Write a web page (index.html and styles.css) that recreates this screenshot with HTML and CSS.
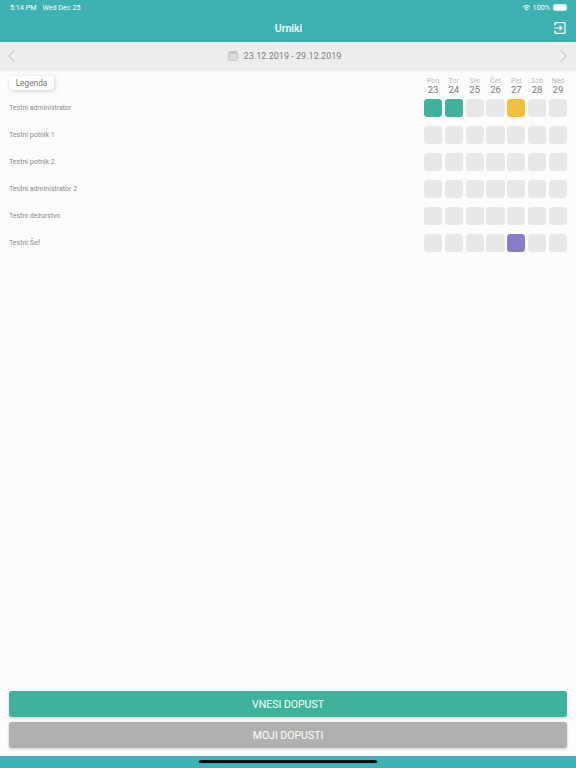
FILE: index.html
```html
<!DOCTYPE html>
<html lang="sl">

<head>
    <meta charset="UTF-8">
    <meta name="viewport" content="width=device-width, initial-scale=1.0">
    <title>Urniki</title>
    <link rel="stylesheet" href="styles.css">
</head>

<body>

    <div class="app">
        <div class="header">
            <div class="status">
                <span class="time">5:14 PM</span>
                <span class="date">Wed Dec 25</span>
                <span class="status-right">
                    <svg class="wifi" width="9" height="7" viewBox="0 0 11 8">
                        <path d="M5.500 8 3.700 5.900a2.700 2.700 0 0 1 3.600 0z" fill="#fff"/>
                        <path d="M1 3.400a6.600 6.600 0 0 1 9 0M2.600 5a4.300 4.300 0 0 1 5.800 0" fill="none" stroke="#fff" stroke-width="1.200"/>
                    </svg>
                    <span>100%</span>
                    <span class="battery"><span class="battery-fill"></span></span>
                </span>
            </div>
            <div class="title-row">
                <span class="title">Urniki</span>
                <svg class="logout" width="12" height="12" viewBox="0 0 12 12">
                    <path d="M1 3.500V1.200a.5.5 0 0 1 .5-.5h9a.5.5 0 0 1 .5.5v9.600a.5.5 0 0 1-.5.5h-9a.5.5 0 0 1-.5-.5V8.500" fill="none" stroke="#fff" stroke-width="1.200"/>
                    <path d="M0.500 6h7M5.500 3.700 7.900 6 5.500 8.300" fill="none" stroke="#fff" stroke-width="1.200"/>
                </svg>
            </div>
        </div>

        <div class="week-bar">
            <svg width="7" height="14" viewBox="0 0 7 14">
                <path d="M6.500 1 .8 7l5.700 6" fill="none" stroke="#b4b4b4" stroke-width="1"/>
            </svg>
            <div class="week-range">
                <svg width="10" height="10" viewBox="0 0 10 10">
                    <rect x="0.500" y="0.500" width="9" height="9" rx="1" fill="#dcdcdc" stroke="#c6c6c6"/>
                    <rect x="0.500" y="0.500" width="9" height="2.500" fill="#c6c6c6"/>
                </svg>
                <span>23.12.2019 - 29.12.2019</span>
            </div>
            <svg width="7" height="14" viewBox="0 0 7 14">
                <path d="M.5 1l5.700 6-5.700 6" fill="none" stroke="#b4b4b4" stroke-width="1"/>
            </svg>
        </div>

        <div class="content">
            <div class="top-row">
                <div class="legend">Legenda</div>
                <div class="days">
                    <div class="day"><span>Pon</span><b>23</b></div>
                    <div class="day"><span>Tor</span><b>24</b></div>
                    <div class="day"><span>Sre</span><b>25</b></div>
                    <div class="day"><span>Čet</span><b>26</b></div>
                    <div class="day"><span>Pet</span><b>27</b></div>
                    <div class="day"><span>Sob</span><b>28</b></div>
                    <div class="day"><span>Ned</span><b>29</b></div>
                </div>
            </div>

            <div class="person">
                <span class="name">Testni administrator</span>
                <div class="days">
                    <div class="cell green"></div><div class="cell green"></div><div class="cell"></div><div class="cell"></div><div class="cell yellow"></div><div class="cell"></div><div class="cell"></div>
                </div>
            </div>
            <div class="person">
                <span class="name">Testni potnik 1</span>
                <div class="days">
                    <div class="cell"></div><div class="cell"></div><div class="cell"></div><div class="cell"></div><div class="cell"></div><div class="cell"></div><div class="cell"></div>
                </div>
            </div>
            <div class="person">
                <span class="name">Testni potnik 2</span>
                <div class="days">
                    <div class="cell"></div><div class="cell"></div><div class="cell"></div><div class="cell"></div><div class="cell"></div><div class="cell"></div><div class="cell"></div>
                </div>
            </div>
            <div class="person">
                <span class="name">Testni administrator 2</span>
                <div class="days">
                    <div class="cell"></div><div class="cell"></div><div class="cell"></div><div class="cell"></div><div class="cell"></div><div class="cell"></div><div class="cell"></div>
                </div>
            </div>
            <div class="person">
                <span class="name">Testni dežurstvo</span>
                <div class="days">
                    <div class="cell"></div><div class="cell"></div><div class="cell"></div><div class="cell"></div><div class="cell"></div><div class="cell"></div><div class="cell"></div>
                </div>
            </div>
            <div class="person">
                <span class="name">Testni Šef</span>
                <div class="days">
                    <div class="cell"></div><div class="cell"></div><div class="cell"></div><div class="cell"></div><div class="cell purple"></div><div class="cell"></div><div class="cell"></div>
                </div>
            </div>
        </div>

        <div class="actions">
            <button class="button button-green">VNESI DOPUST</button>
            <button class="button button-grey">MOJI DOPUSTI</button>
        </div>

        <div class="footer"><div class="home-bar"></div></div>
    </div>

</body>

</html>
```

FILE: styles.css
```css
* {
    box-sizing: border-box;
}

body {
    font-family: 'Roboto', 'Liberation Sans', sans-serif;
    background-color: #fcfcfc;
    color: #777;
    margin: 0;
    padding: 0;
}

.app {
    display: flex;
    flex-direction: column;
    height: 768px;
}

.header {
    height: 42px;
    background-color: #3eb1b3;
    color: #fff;
    padding: 0 9px 0 10px;
}

.status {
    display: flex;
    align-items: center;
    height: 14px;
    font-size: 7.2px;
    gap: 6px;
}

.status-right {
    margin-left: auto;
    display: flex;
    align-items: center;
    gap: 2px;
}

.battery {
    width: 14px;
    height: 7px;
    margin-left: 1px;
    border: 1px solid #d5f0f0;
    border-radius: 2px;
}

.battery-fill {
    display: block;
    height: 100%;
    background-color: #fff;
}

.title-row {
    position: relative;
    height: 28px;
    display: flex;
    align-items: center;
    justify-content: center;
}

.title {
    font-size: 10.5px;
    font-weight: 500;
}

.logout {
    position: absolute;
    right: 1px;
    top: 8px;
}

.week-bar {
    height: 28px;
    background-color: #ededed;
    box-shadow: 0 1px 2px rgba(0, 0, 0, 0.08);
    display: flex;
    align-items: center;
    justify-content: space-between;
    padding: 0 9px 0 8px;
}

.week-range {
    display: flex;
    align-items: center;
    gap: 6px;
    padding-right: 6px;
    font-size: 9px;
    color: #808080;
    letter-spacing: 0.02px;
}

.content {
    flex: 1;
    padding: 6px 9px 0;
}

.top-row {
    display: flex;
    justify-content: space-between;
    align-items: flex-start;
    height: 22px;
    margin-bottom: 1px;
}

.legend {
    background-color: #fff;
    border-radius: 3px;
    box-shadow: 1px 1px 4px rgba(0, 0, 0, 0.18);
    font-size: 8.3px;
    height: 14px;
    width: 45px;
    line-height: 14px;
    text-align: center;
}

.days {
    display: grid;
    grid-template-columns: repeat(7, 18.2px);
    column-gap: 2.63px;
}

.day {
    display: flex;
    flex-direction: column;
    align-items: center;
    line-height: 9px;
}

.day span {
    font-size: 7.2px;
    color: #bcbcbc;
}

.day b {
    font-size: 9.5px;
    font-weight: 400;
    color: #7a7a7a;
    line-height: 10px;
}

.person {
    display: flex;
    justify-content: space-between;
    align-items: center;
    height: 18px;
    margin-bottom: 9px;
}

.name {
    font-size: 7px;
    color: #8a8a8a;
}

.cell {
    height: 18px;
    border-radius: 3.5px;
    background-color: #e8e8e8;
}

.green {
    background-color: #3eb39b;
}

.yellow {
    background-color: #f1c13c;
}

.purple {
    background-color: #8a7cc7;
}

.actions {
    display: flex;
    flex-direction: column;
    gap: 5px;
    padding: 0 9px 8px;
}

.button {
    height: 26px;
    border: none;
    border-radius: 3px;
    font-family: inherit;
    font-size: 10.5px;
    color: #fff;
    box-shadow: 0 1px 3px rgba(0, 0, 0, 0.2);
}

.button-green {
    background-color: #3eb39b;
}

.button-grey {
    background-color: #b0b0b0;
}

.footer {
    height: 12px;
    background-color: #3eb1b3;
    display: flex;
    justify-content: center;
    padding-top: 4px;
}

.home-bar {
    width: 178px;
    height: 3px;
    border-radius: 2px;
    background-color: #000;
}
```
